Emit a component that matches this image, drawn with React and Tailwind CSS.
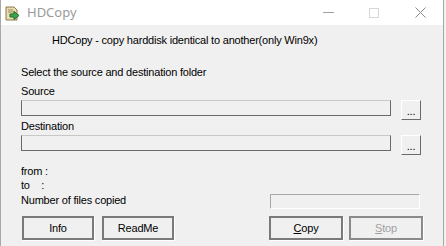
import React from 'react'

const sans = { fontFamily: '"Liberation Sans", Arial, sans-serif' }

function AppIcon(){
  return (
    <svg width="17" height="17" viewBox="0 0 17 17">
      <path d="M2 2h8l3 3v10H2z" fill="#e9dcae" stroke="#8a7a4a" strokeWidth="1" />
      <path d="M4 5h5M4 7h6" stroke="#9a8d62" strokeWidth="1" />
      <path d="M6 9h4V6.5l5 4-5 4V12H6z" fill="#3aa84a" stroke="#1f6e2a" strokeWidth="1" strokeLinejoin="round" />
    </svg>
  )
}

function TitleBar(){
  return (
    <div className="h-[25px] bg-white flex items-center">
      <div className="ml-[3px] mt-[1px]"><AppIcon /></div>
      <span className="ml-[6px] text-[13px] text-[#9a9a9a]" style={{ fontFamily: '"Noto Sans", "Open Sans", sans-serif' }}>HDCopy</span>
      <div className="ml-auto flex items-center h-full">
        <div className="w-[46px] flex justify-center"><div className="w-[11px] h-[1px] bg-[#a0a0a0]" /></div>
        <div className="w-[46px] flex justify-center"><div className="w-[10px] h-[10px] border border-[#d8d8d8]" /></div>
        <div className="w-[46px] flex justify-center">
          <svg width="11" height="11" viewBox="0 0 11 11"><path d="M0.5 0.5l10 10M10.5 0.5l-10 10" stroke="#8a8a8a" strokeWidth="1" /></svg>
        </div>
      </div>
    </div>
  )
}

function PathRow(){
  return (
    <div className="flex items-start h-[20px] mt-[2px]">
      <div className="w-[370px] h-[16px] border-l border-r border-b border-t border-l-[#6a6a6a] border-r-[#6a6a6a] border-b-[#6a6a6a] border-t-[#c8c8c8] bg-[#f0f0f0]" />
      <button className="ml-[10px] w-[20px] h-[20px] bg-[#f0f0f0] border border-t-white border-l-white border-r-[#6a6a6a] border-b-[#6a6a6a] text-[11px] leading-[14px] text-black pt-[2px]">...</button>
    </div>
  )
}

function WinButton({ children, disabled, w }){
  return (
    <button
      className={(w === 72 ? 'w-[72px] ' : 'w-[74px] ') + (disabled
        ? 'h-[24px] bg-[#f0f0f0] border-2 border-[#8a8a8a] shadow-[1px_1px_0_#ffffff] text-[11px] tracking-[-0.2px] text-[#a0a0a0]'
        : 'h-[24px] bg-[#f0f0f0] border-2 border-[#7a7a7a] shadow-[1px_1px_0_#ffffff] text-[11px] tracking-[-0.2px] text-black')}
    >{children}</button>
  )
}

export default function App(){
  return (
    <div className="w-[446px] h-[246px] bg-[#f0f0f0] overflow-hidden" style={sans}>
      <div className="w-[444px] h-[246px] border-l border-r border-[#a8a8a8]">
        <TitleBar />
        <div className="pl-[20px] text-[11px] leading-[13px] tracking-[-0.2px] text-black">
          <div className="mt-[9px] pl-[31px]">HDCopy - copy harddisk identical to another(only Win9x)</div>
          <div className="mt-[19px]">Select the source and destination folder</div>
          <div className="mt-[6px]">Source</div>
          <PathRow />
          <div className="mt-0">Destination</div>
          <PathRow />
          <div className="mt-[10px]">from :</div>
          <div className="mt-[1px] whitespace-pre">to    :</div>
          <div className="flex items-start mt-[2px]">
            <div>Number of files copied</div>
            <div className="ml-auto mr-[23px] w-[150px] h-[15px] border border-[#a8a8a8] border-r-white border-b-white bg-[#f0f0f0]" />
          </div>
          <div className="flex mt-[7px] pl-[1px]">
            <WinButton w={72}>Info</WinButton>
            <div className="ml-[8px]"><WinButton w={72}>ReadMe</WinButton></div>
            <div className="ml-auto flex mr-[20px]">
              <WinButton><span className="underline">C</span>opy</WinButton>
              <div className="ml-[6px]"><WinButton disabled><span className="underline">S</span>top</WinButton></div>
            </div>
          </div>
        </div>
      </div>
    </div>
  )
}
